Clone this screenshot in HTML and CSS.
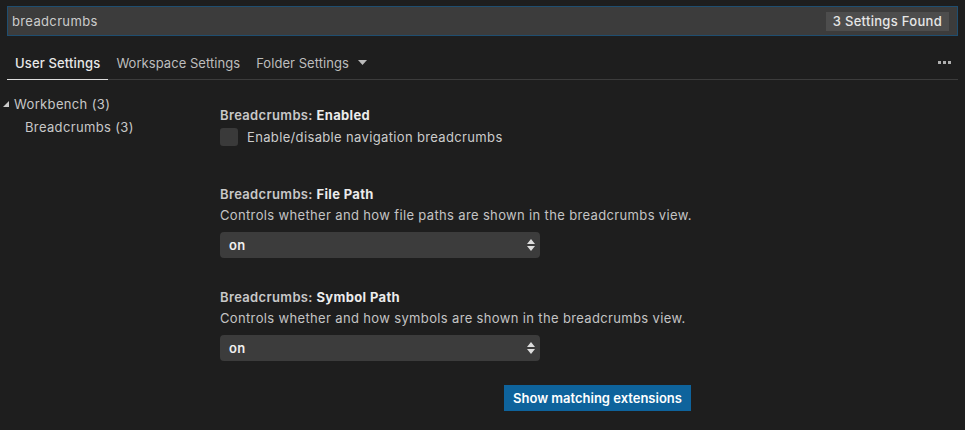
FILE: index.html
```html
<!DOCTYPE html>
<html>
<head>
<meta charset="utf-8">
<link rel="stylesheet" href="styles.css">
</head>
<body>
<div class="page">
  <div class="search">
    <span class="query">breadcrumbs</span>
    <span class="badge">3 Settings Found</span>
  </div>
  <div class="tabs">
    <span class="tab active">User Settings</span>
    <span class="tab">Workspace Settings</span>
    <span class="tab">Folder Settings <svg class="caret" width="9" height="5" viewBox="0 0 9 5"><path d="M0 0H9L4.5 5Z" fill="#bbb"/></svg></span>
    <span class="spacer"></span>
    <span class="more"><i></i><i></i><i></i></span>
  </div>
  <div class="body">
    <div class="tree">
      <div class="node"><svg class="tri" width="6" height="6" viewBox="0 0 6 6"><path d="M6 0V6H0Z" fill="#ccc"/></svg>Workbench (3)</div>
      <div class="node child">Breadcrumbs (3)</div>
    </div>
    <div class="settings">
      <div class="setting">
        <div class="title">Breadcrumbs: <b>Enabled</b></div>
        <div class="check"><span class="box"></span>Enable/disable navigation breadcrumbs</div>
      </div>
      <div class="setting">
        <div class="title">Breadcrumbs: <b>File Path</b></div>
        <div class="desc">Controls whether and how file paths are shown in the breadcrumbs view.</div>
        <div class="select">on<svg width="8" height="12" viewBox="0 0 8 12"><path d="M4 0L8 5H0Z M0 7H8L4 12Z" fill="#ddd"/></svg></div>
      </div>
      <div class="setting">
        <div class="title">Breadcrumbs: <b>Symbol Path</b></div>
        <div class="desc">Controls whether and how symbols are shown in the breadcrumbs view.</div>
        <div class="select">on<svg width="8" height="12" viewBox="0 0 8 12"><path d="M4 0L8 5H0Z M0 7H8L4 12Z" fill="#ddd"/></svg></div>
      </div>
      <div class="actions"><span class="button">Show matching extensions</span></div>
    </div>
  </div>
</div>
</body>
</html>
```
FILE: styles.css
```css
html, body { margin: 0; padding: 0; background: #1e1e1e; }
body { width: 965px; height: 430px; overflow: hidden; font-family: Inter, "Noto Sans", sans-serif; font-size: 13px; letter-spacing: 0.35px; color: #cccccc; }
.page { padding: 6px 7px 0 7px; }
.search { height: 28px; border: 1px solid #1f4e70; background: #3c3c3c; display: flex; align-items: center; padding: 0 8px 0 4px; }
.query { color: #cccccc; flex: 1; }
.badge { background: #4d4d4d; color: #e6e6e6; padding: 1px 7px; line-height: 17px; font-weight: 500; letter-spacing: 0.3px; }
.tabs { display: flex; align-items: center; height: 44px; padding-top: 10px; border-bottom: 1px solid #3c3c3c; box-sizing: border-box; }
.tab { color: #bdbdbd; padding: 0 8px; height: 100%; display: flex; align-items: center; box-sizing: border-box; white-space: nowrap; letter-spacing: 0.05px; }
.tab.active { color: #e8e8e8; border-bottom: 1px solid #dddddd; margin-bottom: -1px; height: calc(100% + 1px); font-weight: 500; letter-spacing: 0.15px; }
.caret { margin-left: 9px; }
.spacer { flex: 1; }
.more { display: flex; gap: 2px; padding-right: 7px; }
.more i { width: 3px; height: 3px; background: #b0b0b0; display: block; }
.body { display: flex; padding-top: 16px; }
.tree { width: 217px; margin-left: -4px; flex-shrink: 0; }
.node { height: 23px; line-height: 16px; display: flex; align-items: flex-start; color: #c8c8c8; white-space: nowrap; }
.tri { margin: 5px 5px 0 0; }
.node.child { padding-left: 22px; }
.settings { display: flex; flex-direction: column; padding-top: 10px; }
.setting { margin-bottom: 30px; }
.setting:first-child { margin-bottom: 39px; }
.title { color: #c8c8c8; font-weight: 600; line-height: 18px; }
.title b { color: #ececec; font-weight: 700; }
.check { display: flex; align-items: center; margin-top: 4px; color: #cccccc; }
.box { width: 18px; height: 18px; background: #3a3a3a; border-radius: 3px; margin-right: 9px; }
.desc { line-height: 18px; margin-top: 3px; color: #c4c4c4; white-space: nowrap; }
.select { margin-top: 8px; width: 320px; height: 26px; background: #3c3c3c; border-radius: 4px; box-sizing: border-box; padding: 0 5px 0 9px; display: flex; align-items: center; justify-content: space-between; color: #f0f0f0; font-weight: 600; }
.actions { display: flex; margin-top: -6px; padding-left: 284px; }
.button { background: #0e639c; color: #ffffff; font-weight: 600; padding: 0 9px; height: 26px; line-height: 26px; white-space: nowrap; letter-spacing: 0; }
```
